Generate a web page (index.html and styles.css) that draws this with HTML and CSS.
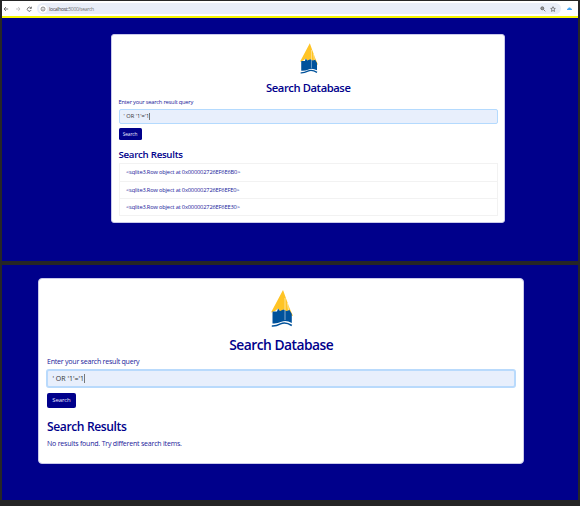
FILE: index.html
```html
<!DOCTYPE html>
<html lang="en">
<head>
<meta charset="utf-8">
<title>Search Database</title>
<link rel="stylesheet" href="styles.css">
</head>
<body>
<svg class="defs" aria-hidden="true">
  <symbol id="logo" viewBox="0 0 22 37">
    <path fill="#ffc425" d="M12 0 L18.500 18 L22 26 L18.500 25 L17.500 20 L15 22 L12.500 19.500 L10 22 L7 18.500 L4 21 L0 22.500 Z"/>
    <path fill="#00529b" d="M1.500 21.500 L6 21.500 L7 18.500 L9 21 L12.500 19.500 L15.500 21 L18.500 20 L20.800 24 V33 Q15 29.500 10.500 31.800 Q6 34 1.500 33.500 Z"/>
    <path fill="none" stroke="#00529b" stroke-width="1.600" d="M.8 36 Q5 36.300 9.500 33.900 Q14.500 31.500 20.800 35.500"/>
    <path fill="none" stroke="#fff" stroke-opacity=".65" stroke-width=".8" d="M14 8V30M16.500 13L17.500 20"/>
  </symbol>
</svg>
<main class="shots">
  <section class="screen screen-full">
    <header class="chrome">
      <svg class="nav" viewBox="0 0 34 14" fill="none" stroke="#555" stroke-width=".8">
        <path d="M6.200 7H2M4 5L2 7L4 9"/>
        <path stroke="#bbb" d="M14 7H18M16.200 5L18 7L16.200 9"/>
        <path d="M29 6.100A2 2 0 1 0 29.200 8M29.400 4.700V6.400H27.700"/>
      </svg>
      <div class="address">
        <svg class="info" viewBox="0 0 8 8" fill="none" stroke="#666" stroke-width=".7"><circle class="info-bg" cx="4" cy="4" r="4"/><circle cx="4" cy="4" r="2"/><path d="M4 3.500V5.200M4 2.600V3"/></svg>
        <span class="url">localhost:<span class="path">5000/search</span></span>
        <svg class="tools" viewBox="0 0 18 8" fill="none" stroke="#555" stroke-width=".7"><circle cx="3.300" cy="3.300" r="1.500" fill="#999"/><path d="M4.500 4.500L6.300 6.300M14 1.700L14.700 3.300L16.300 3.500L15.100 4.700L15.500 6.400L14 5.500L12.500 6.400L12.900 4.700L11.700 3.500L13.300 3.300Z"/></svg>
      </div>
      <svg class="cloud" viewBox="0 0 6 4"><path fill="#42a5f5" d="M1 4Q0 4 0 3T1.300 1.800C1.500 0 4.300 0 4.700 1.800Q6 2 6 3T5 4Z"/></svg>
    </header>
    <div class="card card-small">
      <svg class="logo"><use href="#logo"/></svg>
      <h1 class="title">Search Database</h1>
      <label class="label">Enter your search result query</label>
      <div class="field"><span>' OR '1'='1</span><i class="caret"></i></div>
      <button class="button">Search</button>
      <h2 class="heading">Search Results</h2>
      <ul class="results">
        <li>&lt;sqlite3.Row object at 0x000002726EF6E6B0&gt;</li>
        <li>&lt;sqlite3.Row object at 0x000002726EF6EFE0&gt;</li>
        <li>&lt;sqlite3.Row object at 0x000002726EF6EE30&gt;</li>
      </ul>
    </div>
  </section>
  <section class="screen screen-crop">
    <div class="card card-large">
      <svg class="logo"><use href="#logo"/></svg>
      <h1 class="title">Search Database</h1>
      <label class="label">Enter your search result query</label>
      <div class="field"><span>' OR '1'='1</span><i class="caret"></i></div>
      <button class="button">Search</button>
      <h2 class="heading">Search Results</h2>
      <p class="empty">No results found. Try different search items.</p>
    </div>
  </section>
</main>
</body>
</html>
```
FILE: styles.css
```css
* { box-sizing: border-box; }
body { margin: 0; height: 506px; overflow: hidden; background: #262626; color: #00008b; font-family: "Open Sans", "Noto Sans", sans-serif; }
.defs { display: none; }
svg { display: block; flex: none; }
.shots { display: flex; flex-direction: column; gap: 4px; padding: 1px 2px 0; }
.screen { background: #00008b; }
.screen-full { height: 260px; }
.screen-crop { height: 235px; padding-top: 13px; }

.chrome { display: flex; align-items: center; height: 17px; background: #fff; border-bottom: 2px solid #f5f500; }
.nav { width: 34px; height: 14px; }
.address { display: flex; align-items: center; width: 524px; height: 11px; margin-left: 1px; padding-left: 2px; border-radius: 6px; background: #e9eef8; }
.info { width: 8px; height: 8px; }
.info-bg { fill: #fff; stroke: none; }
.url { margin-left: 2px; font-size: 5.1px; line-height: 8px; letter-spacing: -.34px; color: #444; white-space: nowrap; }
.path { color: #777; }
.tools { width: 18px; height: 8px; margin-left: auto; margin-right: 4px; }
.cloud { width: 5px; height: 3.5px; margin-left: 6px; }

.card { display: flex; flex-direction: column; align-items: flex-start; background: #fff; border: 1px solid #c9c9ea; white-space: nowrap; }
.title, .heading, .empty { margin: 0; font-weight: 600; }
.title, .logo { align-self: center; }
.label, .empty, .results { color: #20209a; }
.field { display: flex; align-items: center; align-self: stretch; background: #e8effc; color: #333; }
.caret { width: 1px; background: #777; }
.button { padding: 0; border: 0; background: #00008b; color: #e8e8ff; font-family: inherit; }

.card-small { width: 394px; height: 189px; margin: 16px 0 0 109px; padding: 8px 6px 0 6.5px; border-radius: 3px; }
.card-small .logo { width: 18px; height: 31px; margin-left: 1px; }
.card-small .title { height: 16px; margin-top: 6px; font-size: 11.2px; line-height: 16px; letter-spacing: -.4px; }
.card-small .label { height: 10px; margin-top: 1px; font-size: 5.8px; line-height: 10px; letter-spacing: -.24px; }
.card-small .field { height: 15px; margin-top: 1.5px; padding-left: 4px; border: 1px solid #b4dafe; border-radius: 2px; font-size: 5.7px; }
.card-small .caret { height: 7px; }
.card-small .button { width: 23px; height: 12px; margin-top: 4px; border-radius: 1.5px; font-size: 4.8px; line-height: 12px; letter-spacing: -.1px; }
.card-small .heading { height: 14px; margin-top: 8.5px; font-size: 9.7px; line-height: 14px; letter-spacing: -.28px; }
.results { align-self: stretch; height: 53px; margin: .5px 0 0; padding: 0; display: grid; grid-template-rows: repeat(3, 1fr); list-style: none; border: 1px solid #f2f2f2; font-size: 5.7px; letter-spacing: -.16px; }
.results li { display: flex; align-items: center; padding-left: 6.5px; }
.results li + li { border-top: 1px solid #f2f2f2; }

.card-large { width: 486px; height: 186px; margin-left: 36px; padding: 11px 7.5px 0 8px; border-radius: 4px; }
.card-large .logo { width: 22px; height: 37px; margin-left: 1px; }
.card-large .title { height: 20px; margin-top: 8px; font-size: 13.8px; line-height: 20px; letter-spacing: -.5px; }
.card-large .label { height: 12px; margin-top: 0; font-size: 7.1px; line-height: 12px; letter-spacing: -.26px; }
.card-large .field { height: 19px; margin: 2px 0 0 -1px; padding-left: 4.5px; border: 2px solid #b9dafc; border-radius: 3px; font-size: 7px; }
.card-large .caret { height: 9px; }
.card-large .button { width: 29px; height: 15px; margin-top: 5px; border-radius: 2px; font-size: 6px; line-height: 15px; letter-spacing: -.12px; }
.card-large .heading { height: 18px; margin-top: 10px; font-size: 12.1px; line-height: 18px; letter-spacing: -.4px; }
.card-large .empty { height: 12px; margin-top: 1.5px; font-size: 7px; font-weight: 400; line-height: 12px; letter-spacing: -.2px; }
```
